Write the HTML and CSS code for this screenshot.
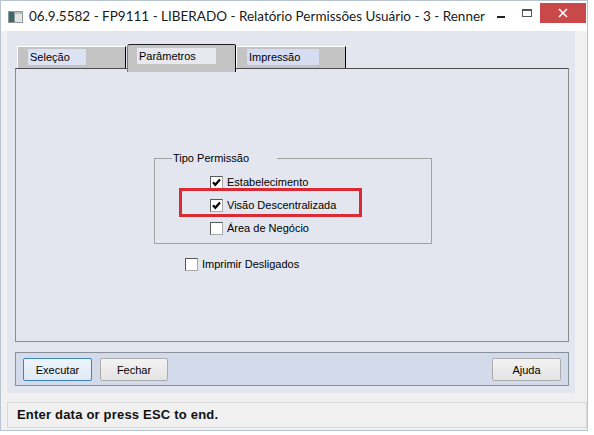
FILE: index.html
```html
<!DOCTYPE html>
<html>
<head>
<meta charset="utf-8">
<link rel="stylesheet" href="styles.css">
</head>
<body>
<div class="window">
  <div class="titlebar">
    <svg class="app-icon" width="15" height="12" viewBox="0 0 15 12">
      <rect x="0" y="0" width="15" height="12" fill="#8e9a9a"/>
      <rect x="1" y="1" width="5" height="10" fill="#3f6767"/>
      <rect x="7" y="1" width="7" height="10" fill="#e4e6e6"/>
      <rect x="7" y="1" width="7" height="2" fill="#b9c0c0"/>
    </svg>
    <span class="title">06.9.5582 - FP9111 - LIBERADO - Relatório Permissões Usuário - 3 - Renner</span>
    <span class="ctl ctl-min"><span class="min-glyph"></span></span>
    <span class="ctl ctl-max"><span class="max-glyph"></span></span>
    <span class="ctl ctl-close">
      <svg width="10" height="10" viewBox="0 0 10 10"><path d="M1 1 L9 9 M9 1 L1 9" stroke="#fff" stroke-width="1.6" fill="none"/></svg>
    </span>
  </div>
  <div class="client">
    <div class="panel">
      <div class="tabs">
        <div class="tab tab-sel"><span class="tab-label">Seleção</span></div>
        <div class="tab tab-active tab-par"><span class="tab-label">Parâmetros</span></div>
        <div class="tab tab-imp"><span class="tab-label">Impressão</span></div>
      </div>
      <div class="page">
        <div class="group">
          <div class="group-caption">Tipo Permissão</div>
          <div class="check-row first">
            <span class="cb"><svg width="11" height="11" viewBox="0 0 11 11"><path d="M2 5.2 L4.3 7.8 L9 2.5" stroke="#000" stroke-width="2.1" fill="none"/></svg></span>
            <span class="cb-text">Estabelecimento</span>
          </div>
          <div class="check-row marked">
            <span class="cb"><svg width="11" height="11" viewBox="0 0 11 11"><path d="M2 5.2 L4.3 7.8 L9 2.5" stroke="#000" stroke-width="2.1" fill="none"/></svg></span>
            <span class="cb-text">Visão Descentralizada</span>
            <span class="highlight"></span>
          </div>
          <div class="check-row">
            <span class="cb"></span>
            <span class="cb-text">Área de Negócio</span>
          </div>
        </div>
        <div class="check-row standalone">
          <span class="cb"></span>
          <span class="cb-text">Imprimir Desligados</span>
        </div>
      </div>
      <div class="buttonbar">
        <button class="btn btn-focus btn-exec">Executar</button>
        <button class="btn btn-close">Fechar</button>
        <span class="spacer"></span>
        <button class="btn btn-help">Ajuda</button>
      </div>
    </div>
    <div class="status">Enter data or press ESC to end.</div>
  </div>
</div>
</body>
</html>
```
FILE: styles.css
```css
* { box-sizing: border-box; }
html, body { margin: 0; padding: 0; background: #ffffff; }
body {
  width: 594px; height: 435px; overflow: hidden;
  font-family: "Liberation Sans", Arial, sans-serif;
  font-size: 11px; color: #000;
}
.window {
  width: 588px; height: 431px;
  border: 1px solid #b9c4d1;
  background: #f0f0f0;
  display: flex; flex-direction: column;
}
.titlebar {
  height: 30px; flex: none;
  background: #ffffff;
  display: flex; align-items: flex-start;
}
.app-icon { flex: none; margin: 10px 0 0 7px; }
.title {
  flex: 1; margin: 5px 0 0 6px;
  font-family: Lato, "Liberation Sans", sans-serif;
  font-size: 13.5px; line-height: 20px;
  white-space: nowrap; color: #1a1a1a;
}
.ctl { flex: none; display: flex; justify-content: center; }
.ctl-min { width: 26px; height: 30px; align-items: flex-start; }
.min-glyph { width: 8px; height: 2px; background: #222; margin-top: 15px; }
.ctl-max { width: 26px; height: 30px; align-items: flex-start; }
.max-glyph { width: 10px; height: 8px; border: 1px solid #555; border-top-width: 2px; margin-top: 8px; }
.ctl-close {
  width: 46px; height: 20px; margin: 2px 1px 0 0;
  background: #c9494b; align-items: center;
}
.client { flex: 1; display: flex; flex-direction: column; padding-left: 6px; }
.panel {
  width: 568px; height: 362px; flex: none;
  background: #e3e6ee;
  padding: 13px 6px 0 8px;
  display: flex; flex-direction: column;
}
.tabs { height: 24px; flex: none; display: flex; align-items: flex-end; padding-left: 2px; }
.tab {
  height: 22px; flex: none;
  background: #c3c3c3;
  border-top: 1px solid #ffffff;
  border-left: 1px solid #ffffff;
  border-right: 1px solid #000000;
  padding: 2px 0 0 10px;
}
.tab-sel { width: 109px; }
.tab-imp { width: 110px; }
.tab-active {
  width: 109px; height: 28px; margin: 0 0 -4px 1px;
  position: relative; z-index: 1;
  border-top: 1px solid #1e1e1e;
  border-left: 1px solid #7a7a7a;
  border-right: 1px solid #000;
  border-top-left-radius: 3px;
  border-top-right-radius: 2px;
  padding: 3px 0 0 9px;
}
.tab-label { display: block; height: 16px; line-height: 16px; padding-left: 2px; white-space: nowrap; }
.tab-sel .tab-label { width: 58px; background: #dbe2f4; }
.tab-par .tab-label { width: 79px; background: #e7e9ef; }
.tab-imp .tab-label { width: 72px; background: #d6ddf2; }
.page {
  height: 274px; flex: none;
  border: 1px solid #8c8c8c;
  border-top-color: #4e4e4e;
  display: flex; flex-direction: column; align-items: flex-start;
}
.group {
  width: 278px; height: 86px; margin: 89px 0 0 138px;
  border: 1px solid #a3a3a3;
  flex: none;
}
.group-caption {
  width: 105px; height: 13px; line-height: 13px;
  margin: -7px 0 0 17px; padding-left: 1px;
  background: #e3e6ee;
}
.check-row {
  height: 13px; margin: 10px 0 0 55px;
  display: flex; align-items: center;
  white-space: nowrap;
}
.check-row.first { margin-top: 11px; }
.check-row.standalone { margin: 14px 0 0 169px; }
.cb {
  width: 13px; height: 13px; flex: none;
  border: 1px solid;
  border-color: #5a5a5a #a8a8a8 #a8a8a8 #5a5a5a;
  background: #fff;
  margin-right: 4px;
  display: flex; align-items: center; justify-content: center;
}
.cb-text { line-height: 13px; }
.marked { position: relative; }
.highlight {
  position: absolute; left: -31px; top: -11px;
  width: 183px; height: 29px;
  border: 3px solid #dc2a35;
}
.buttonbar {
  height: 34px; margin-top: 10px; flex: none;
  border: 1px solid #8a9099;
  background: #d3dbeb;
  padding: 5px 7px 0 7px;
  display: flex; align-items: flex-start;
}
.spacer { flex: 1; }
.btn {
  height: 23px; padding: 0;
  font-family: "Liberation Sans", Arial, sans-serif; font-size: 11px; color: #000;
  background: linear-gradient(#f3f3f3, #e3e3e3);
  border: 1px solid #acacac; border-radius: 2px;
}
.btn-exec { width: 69px; }
.btn-close { width: 68px; margin-left: 8px; }
.btn-help { width: 69px; }
.btn-focus { border-color: #3f84bd; background: linear-gradient(#edf4fb, #dfeaf6); }
.status {
  width: 580px; height: 26px; margin-top: 9px; flex: none;
  border: 1px solid #d9d9d9;
  background: #f0f0f0;
  padding-left: 9px;
  font-weight: bold; font-size: 13px; line-height: 24px;
  letter-spacing: 0.2px; color: #111;
  white-space: nowrap;
}
```
